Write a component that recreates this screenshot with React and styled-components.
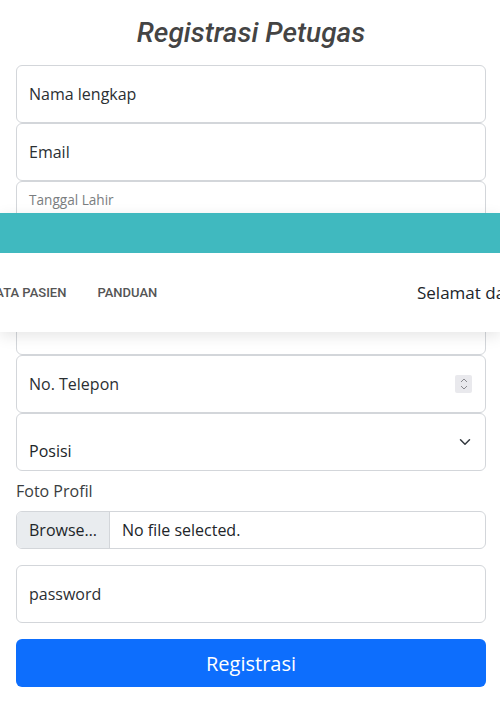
import React from 'react'
import styled, { createGlobalStyle } from 'styled-components'

const GlobalStyle = createGlobalStyle`
  * { box-sizing: border-box; }
  html, body {
    margin: 0;
    padding: 0;
    overflow: hidden;
    background: #fff;
    font-family: "Open Sans", "Liberation Sans", sans-serif;
    color: #212529;
  }
`;

function App() {
  return (
    <>
      <GlobalStyle />
      <Page>
        <Title>Registrasi Petugas</Title>

        <FieldGroup>
          <Field><Placeholder>Nama lengkap</Placeholder></Field>
          <Field><Placeholder>Email</Placeholder></Field>
          <Field floated>
            <SmallLabel>Tanggal Lahir</SmallLabel>
            <Value>mm/dd/yyyy</Value>
          </Field>
          <Field floated><SmallLabel>Alamat</SmallLabel></Field>
          <Field floated><SmallLabel>Jenis Kelamin</SmallLabel></Field>
          <Field>
            <Placeholder>No. Telepon</Placeholder>
            <Spinner>
              <svg width="8" height="14" viewBox="0 0 8 14" fill="none" stroke="#8a8a8f" strokeWidth="1">
                <path d="M1 5l3-3 3 3" />
                <path d="M1 9l3 3 3-3" />
              </svg>
            </Spinner>
          </Field>
          <Field select>
            <SelectValue>Posisi</SelectValue>
            <Chevron>
              <svg width="16" height="12" viewBox="0 0 16 16" fill="none" stroke="#343a40" strokeWidth="2" strokeLinecap="round" strokeLinejoin="round">
                <path d="M2 5l6 6 6-6" />
              </svg>
            </Chevron>
          </Field>
        </FieldGroup>

        <FormLabel>Foto Profil</FormLabel>
        <FileInput>
          <BrowseButton>Browse…</BrowseButton>
          <FileName>No file selected.</FileName>
        </FileInput>

        <Field spaced><Placeholder>password</Placeholder></Field>

        <SubmitButton>Registrasi</SubmitButton>
      </Page>

      <NavBar>
        <TopStrip />
        <MenuBar>
          <NavLinks>
            <NavLink>DATA PASIEN</NavLink>
            <NavLink>PANDUAN</NavLink>
          </NavLinks>
          <Welcome>Selamat datang, Petugas</Welcome>
        </MenuBar>
      </NavBar>
    </>
  )
}

const Page = styled.div`
  padding: 0 14px 0 16px;
`;

const Title = styled.h3`
  margin: 17px 0 17px;
  font-family: Roboto, "Liberation Sans", sans-serif;
  font-style: italic;
  font-weight: 500;
  font-size: 28px;
  line-height: 31px;
  text-align: center;
  color: #444;
`;

const FieldGroup = styled.div`
  display: flex;
  flex-direction: column;
`;

const Field = styled.div`
  position: relative;
  height: 58px;
  border: 1px solid #d3d6da;
  border-radius: 6px;
  background: #fff;
  display: flex;
  flex-direction: column;
  justify-content: ${p => (p.floated || p.select ? 'flex-start' : 'center')};
  padding: ${p => (p.select ? '25px 12px 0' : p.floated ? '8px 12px 0' : '0 12px')};
  margin-top: ${p => (p.spaced ? '16px' : '0')};
`;

const Placeholder = styled.span`
  font-size: 16px;
  line-height: 24px;
  color: #2b2f33;
`;

const SmallLabel = styled.span`
  font-size: 13.6px;
  line-height: 20px;
  color: #7a7d80;
`;

const Value = styled.span`
  font-size: 16px;
  line-height: 18px;
  color: #212529;
`;

const SelectValue = styled.span`
  font-size: 16px;
  line-height: 24px;
  color: #212529;
`;

const Spinner = styled.div`
  position: absolute;
  right: 13px;
  top: 19px;
  width: 17px;
  height: 18px;
  background: #e9e9ed;
  border-radius: 2px;
  display: flex;
  align-items: center;
  justify-content: center;
`;

const Chevron = styled.div`
  position: absolute;
  right: 12px;
  top: 22px;
  display: flex;
`;

const FormLabel = styled.div`
  margin-top: 8px;
  margin-bottom: 8px;
  font-size: 16px;
  line-height: 24px;
  color: #3a3d40;
`;

const FileInput = styled.div`
  display: flex;
  height: 38px;
  border: 1px solid #d3d6da;
  border-radius: 6px;
  overflow: hidden;
  font-size: 16px;
`;

const BrowseButton = styled.div`
  display: flex;
  align-items: center;
  padding: 0 12px;
  background: #e9ecef;
  border-right: 1px solid #d3d6da;
  color: #212529;
`;

const FileName = styled.div`
  display: flex;
  align-items: center;
  padding: 0 12px;
  color: #212529;
`;

const SubmitButton = styled.button`
  display: block;
  width: 100%;
  margin-top: 16px;
  height: 48px;
  border: none;
  border-radius: 6px;
  background: #0d6efd;
  color: #fff;
  font-family: "Open Sans", "Liberation Sans", sans-serif;
  font-size: 20px;
  cursor: pointer;
`;

const NavBar = styled.header`
  position: fixed;
  top: 213px;
  left: 0;
  right: 0;
  box-shadow: 0 4px 14px rgba(0, 0, 0, 0.1);
`;

const TopStrip = styled.div`
  height: 40px;
  background: #40b9bf;
`;

const MenuBar = styled.nav`
  height: 79px;
  background: #fff;
  display: flex;
  align-items: center;
  white-space: nowrap;
  overflow: hidden;
`;

const NavLinks = styled.ul`
  flex: 0 0 430px;
  margin: 0 0 0 -13px;
  padding: 0;
  list-style: none;
  display: flex;
  gap: 31px;
`;

const NavLink = styled.li`
  font-family: Roboto, "Liberation Sans", sans-serif;
  font-weight: 500;
  font-size: 13px;
  color: #555;
`;

const Welcome = styled.span`
  font-size: 17px;
  color: #212529;
`;

export default App;
